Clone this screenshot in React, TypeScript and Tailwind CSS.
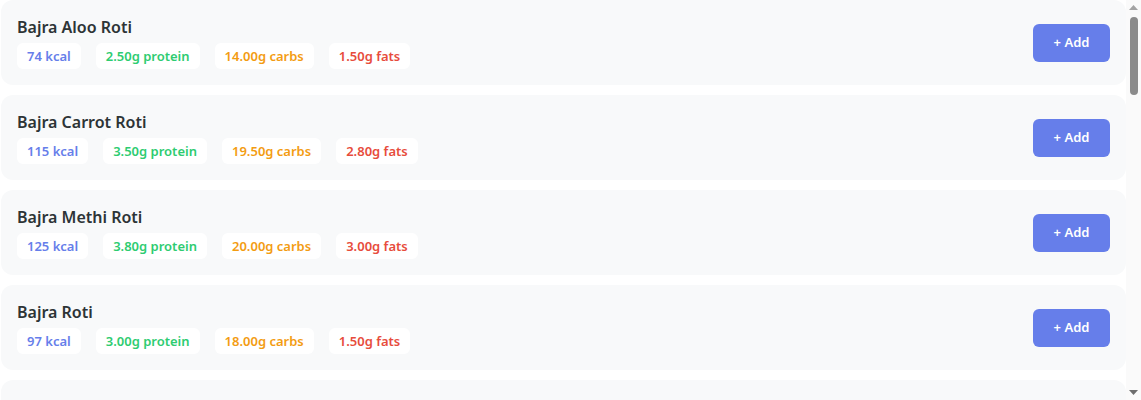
import React from "react";

type Food = { name: string; kcal: number; protein: string; carbs: string; fats: string };

const foods: Food[] = [
  { name: "Bajra Aloo Roti", kcal: 74, protein: "2.50", carbs: "14.00", fats: "1.50" },
  { name: "Bajra Carrot Roti", kcal: 115, protein: "3.50", carbs: "19.50", fats: "2.80" },
  { name: "Bajra Methi Roti", kcal: 125, protein: "3.80", carbs: "20.00", fats: "3.00" },
  { name: "Bajra Roti", kcal: 97, protein: "3.00", carbs: "18.00", fats: "1.50" },
  { name: "Bajra Spinach Roti", kcal: 110, protein: "3.60", carbs: "18.50", fats: "2.50" },
];

function Card({ f }: { f: Food }) {
  return (
    <div className="flex shrink-0 items-center justify-between rounded-xl bg-[#f8f9fa] p-4 ml-px">
      <div className="flex flex-col">
        <div className="text-[16px] leading-[22px] font-semibold text-[#2d3436]">{f.name}</div>
        <div className="mt-[5px] flex gap-[15px] text-[13px] font-semibold leading-[18px]">
          <span className="rounded-md bg-white px-[10px] py-1 text-[#667eea]">{f.kcal} kcal</span>
          <span className="rounded-md bg-white px-[10px] py-1 text-[#2ecc71]">{f.protein}g protein</span>
          <span className="rounded-md bg-white px-[10px] py-1 text-[#f39c12]">{f.carbs}g carbs</span>
          <span className="rounded-md bg-white px-[10px] py-1 text-[#e74c3c]">{f.fats}g fats</span>
        </div>
      </div>
      <button className="h-[38px] w-[77px] rounded-md bg-[#667eea] text-[13px] font-semibold text-white">
        + Add
      </button>
    </div>
  );
}

function Scrollbar() {
  return (
    <div className="flex h-[400px] w-[15px] shrink-0 flex-col items-center bg-[#fafafa]">
      <svg width="15" height="15" viewBox="0 0 15 15" className="shrink-0">
        <polygon points="3,10 7.5,5 12,10" fill="#a3a3a3" />
      </svg>
      <div className="mt-[2px] ml-[1px] h-[78px] w-[8px] rounded-full bg-[#8b8b8b]" />
      <div className="flex-1" />
      <svg width="15" height="15" viewBox="0 0 15 15" className="shrink-0">
        <polygon points="3,5 12,5 7.5,10" fill="#6e6e6e" />
      </svg>
    </div>
  );
}

export default function App() {
  return (
    <div
      className="flex h-[400px] w-[1141px] overflow-hidden bg-white"
      style={{ fontFamily: '"Noto Sans", sans-serif' }}
    >
      <div className="flex h-[400px] min-w-0 flex-1 flex-col gap-[10px] overflow-hidden">
        {foods.map((f) => (
          <Card key={f.name} f={f} />
        ))}
      </div>
      <Scrollbar />
    </div>
  );
}
